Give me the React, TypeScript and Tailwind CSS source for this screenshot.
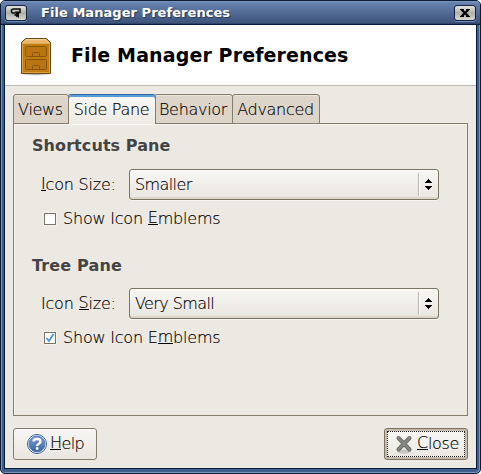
import React from "react";

const U = ({ children }: { children: React.ReactNode }) => (
  <span className="inline-block h-[16px] border-b border-black leading-[18px]">{children}</span>
);

function Cabinet() {
  return (
    <svg width="38" height="40" viewBox="0 0 38 40" className="overflow-visible">
      <defs>
        <linearGradient id="top" x1="0" y1="0" x2="0" y2="1">
          <stop offset="0" stopColor="#f7c988" />
          <stop offset="1" stopColor="#e0a045" />
        </linearGradient>
        <radialGradient id="shade">
          <stop offset="0" stopColor="#444" stopOpacity=".8" />
          <stop offset="1" stopColor="#555" stopOpacity="0" />
        </radialGradient>
      </defs>
      <ellipse cx="18" cy="38" rx="18" ry="3" fill="url(#shade)" />
      <path d="M3.5 7.5L7.5 3.5H28.5L32.5 7.5V38.5H3.5Z" fill="#c17d11" stroke="#6b4d16" />
      <path d="M4.5 8L8.200 4.500H27.800L31.500 8Z" fill="url(#top)" stroke="#f3d29c" />
      <path d="M4.500 8.500V37.500H31.500V8.500" fill="none" stroke="#dda03c" />
      <g fill="#b97512" stroke="#8a5606">
        <rect x="7.500" y="11.500" width="21" height="10" rx="1" />
        <rect x="7.500" y="24.500" width="21" height="10" rx="1" />
        <path d="M14.500 21V18.500Q14.500 17.500 15.500 17.500H20.500Q21.500 17.500 21.500 18.500V21M14.500 34V31.500Q14.500 30.500 15.500 30.500H20.500Q21.500 30.500 21.500 31.500V34" />
      </g>
    </svg>
  );
}

function Combo({ value }: { value: string }) {
  return (
    <div className="flex h-[31px] w-[310px] items-center rounded-[3px] border border-[#7c7463] bg-linear-to-b from-[#f8f7f5] via-[#f0eeea] to-[#e9e5df] pl-[5px] shadow-[0_1px_0_#f7f5f2,inset_0_1px_0_#fff,inset_0_-2px_0_#ddd5ca]">
      <span className="grow tracking-[-0.6px]">{value}</span>
      <span className="h-[23px] w-[2px] border-l border-r border-l-[#b8b5ad] border-r-white" />
      <svg width="18" height="29" shapeRendering="crispEdges">
        <path d="M5 13V12H6V11H7V10H8V9H9V10H10V11H11V12H12V13ZM5 16H12V17H11V18H10V19H9V20H8V19H7V18H6V17H5Z" />
      </svg>
    </div>
  );
}

function Check({ checked, children }: { checked?: boolean; children: React.ReactNode }) {
  return (
    <div className="ml-[13px] flex h-[22px] items-center">
      <span className="mr-[7px] h-3 w-3 border border-[#7c7463] bg-white shadow-[0_0_0_1px_#f4f2ee]">
        {checked && (
          <svg width="10" height="10">
            <path d="M1.500 5L4 8L8.500 1" fill="none" stroke="#4a90d9" strokeWidth="1.700" />
          </svg>
        )}
      </span>
      <span className="flex whitespace-pre tracking-[-0.2px]">{children}</span>
    </div>
  );
}

function Tab({ w, active, children }: { w: string; active?: boolean; children: React.ReactNode }) {
  return (
    <div
      className={`${w} relative flex h-[30px] shrink-0 justify-center whitespace-nowrap rounded-t-[3px] border border-[#857d6c] pr-px pt-[5px] tracking-[-0.3px] ${
        active
          ? "z-10 -mx-px border-b-0 border-t-[#2f6ca8] bg-linear-to-b from-[#f9f8f6] to-[#edeae3] shadow-[inset_0_2px_0_#5b9bd8]"
          : "bg-[#ddd5c9] shadow-[inset_0_1px_0_#ebe5dc]"
      }`}
    >
      {children}
    </div>
  );
}

const sysButton =
  "flex h-4 w-[22px] items-center justify-center rounded-[3px] border border-[#14243f] bg-linear-to-b from-[#e4e4e0] via-[#aeb0a8] to-[#d7d8d2] shadow-[0_1px_0_#6d8dbd]";

export default function App() {
  return (
    <div className="h-[474px] w-[481px] bg-white font-['DejaVu_Sans',sans-serif] text-[16px] font-extralight leading-[20px] text-black [-webkit-text-stroke:0.15px_black]">
      <div className="flex h-full w-full flex-col overflow-hidden rounded-[5px] border border-[#0e1c33] bg-[#405e8c] shadow-[inset_1px_1px_0_#7895c2,inset_-1px_-1px_0_#7895c2]">
        <header className="flex h-[24px] shrink-0 items-center border-b border-[#071b3f] bg-linear-to-b from-[#6b87b5] to-[#3b5178] pl-1 pr-1 shadow-[inset_0_1px_0_#7895c2,inset_0_-1px_0_#2e4469]">
          <span className={sysButton}>
            <svg width="12" height="12">
              <path d="M5 6H2.500L1.500 5V3L3 2H10V5.500H9" fill="none" stroke="#0b0b0b" strokeWidth="1.500" />
              <path d="M5 4.500H9V11.500L7.500 9.500L6.500 10.500L6 9L3.500 8L5.500 7Z" fill="#0b0b0b" />
            </svg>
          </span>
          <h1 className="ml-[14px] grow text-[13px] font-bold leading-[16px] tracking-[0.05px] text-white [-webkit-text-stroke:0] [text-shadow:1px_1px_1px_#263955]">
            File Manager Preferences
          </h1>
          <span className={sysButton}>
            <svg width="12" height="10">
              <path d="M2.500 1.500L9.500 8.500M9.500 1.500L2.500 8.500" stroke="#000" strokeWidth="2.300" />
              <path d="M1 1.500H5M7 1.500H11M1 8.500H5M7 8.500H11" stroke="#000" />
            </svg>
          </span>
        </header>
        <main className="mx-[3px] mb-[4px] flex grow flex-col border-x border-b border-[#071b3f] bg-[#ece9e2]">
          <div className="flex h-[61px] shrink-0 items-center border-b border-[#b9b9b0] bg-white pl-[13px]">
            <Cabinet />
            <h2 className="ml-[15px] text-[19px] font-bold leading-[24px] tracking-[0.12px] [-webkit-text-stroke:0]">File Manager Preferences</h2>
          </div>
          <div className="flex grow flex-col px-2 pt-2">
            <nav className="flex h-[29px] shrink-0">
              <Tab w="w-[56px]">Views</Tab>
              <Tab w="w-[88px]" active>Side Pane</Tab>
              <Tab w="-ml-px w-[79px]">Behavior</Tab>
              <Tab w="-ml-px w-[88px]">Advanced</Tab>
            </nav>
            <section className="h-[293px] shrink-0 border border-[#857d6c] pl-[17px] pt-[12px] shadow-[inset_1px_1px_0_#f7f5f2]">
              <h3 className="ml-px h-[33px] font-bold tracking-[0.08px] text-[#444] [-webkit-text-stroke:0]">Shortcuts Pane</h3>
              <div className="flex items-center">
                <span className="ml-[10px] flex w-[88px] whitespace-pre tracking-[-0.2px]"><U>I</U>con Size:</span>
                <Combo value="Smaller" />
              </div>
              <div className="mt-[8px]"><Check>Show Icon <U>E</U>mblems</Check></div>
              <h3 className="ml-px mt-[26px] h-[32px] font-bold tracking-[0.15px] text-[#444] [-webkit-text-stroke:0]">Tree Pane</h3>
              <div className="flex items-center">
                <span className="ml-[10px] flex w-[88px] whitespace-pre tracking-[-0.2px]">Icon <U>S</U>ize:</span>
                <Combo value="Very Small" />
              </div>
              <div className="mt-[8px]"><Check checked>Show Icon E<U>m</U>blems</Check></div>
            </section>
            <footer className="mt-3 flex justify-between">
              <button className="flex h-8 w-[84px] items-center rounded-[3px] border border-[#857d6c] bg-linear-to-b from-[#f8f7f5] to-[#e9e5df] pl-[12px] shadow-[inset_0_1px_0_#fff]">
                <svg width="22" height="22" className="mr-[2px]">
                  <defs>
                    <linearGradient id="blue" x1="0" y1="0" x2="0" y2="1">
                      <stop offset="0" stopColor="#7e9fce" />
                      <stop offset="1" stopColor="#3465a4" />
                    </linearGradient>
                  </defs>
                  <circle cx="11" cy="11" r="9.500" fill="#fff" stroke="#3a619b" />
                  <circle cx="11" cy="11" r="8" fill="url(#blue)" stroke="#5c80b6" />
                  <path d="M7.500 8.500Q7.500 6 11 6Q14.500 6 14.500 8.500Q14.500 10 12.500 11Q11.200 11.600 11.200 13" fill="none" stroke="#fff" strokeWidth="2.300" />
                  <circle cx="11.200" cy="15.500" r="1.400" fill="#fff" />
                </svg>
                <span className="flex tracking-[-0.6px]"><U>H</U>elp</span>
              </button>
              <button className="flex h-8 w-[84px] items-center rounded-[3px] border border-[#7c7463] bg-[#c5bbad] p-[2px]">
                <span className="flex h-[26px] w-full items-center border border-dotted border-[#222] bg-linear-to-b from-[#f8f7f5] to-[#ece8e2] bg-clip-border pl-[7px]">
                  <svg width="20" height="22" className="mr-[2px]">
                    <ellipse cx="9" cy="18.500" rx="7" ry="2" fill="#c8c5c0" />
                    <path d="M3.500 5L14.500 16.500M14.500 5L3.500 16.500" stroke="#666963" strokeWidth="4" strokeLinecap="round" />
                    <path d="M3.500 5L14.500 16.500M14.500 5L3.500 16.500" stroke="#858781" strokeWidth="2.500" strokeLinecap="round" />
                  </svg>
                  <span className="flex tracking-[-0.3px]"><U>C</U>lose</span>
                </span>
              </button>
            </footer>
          </div>
        </main>
      </div>
    </div>
  );
}
